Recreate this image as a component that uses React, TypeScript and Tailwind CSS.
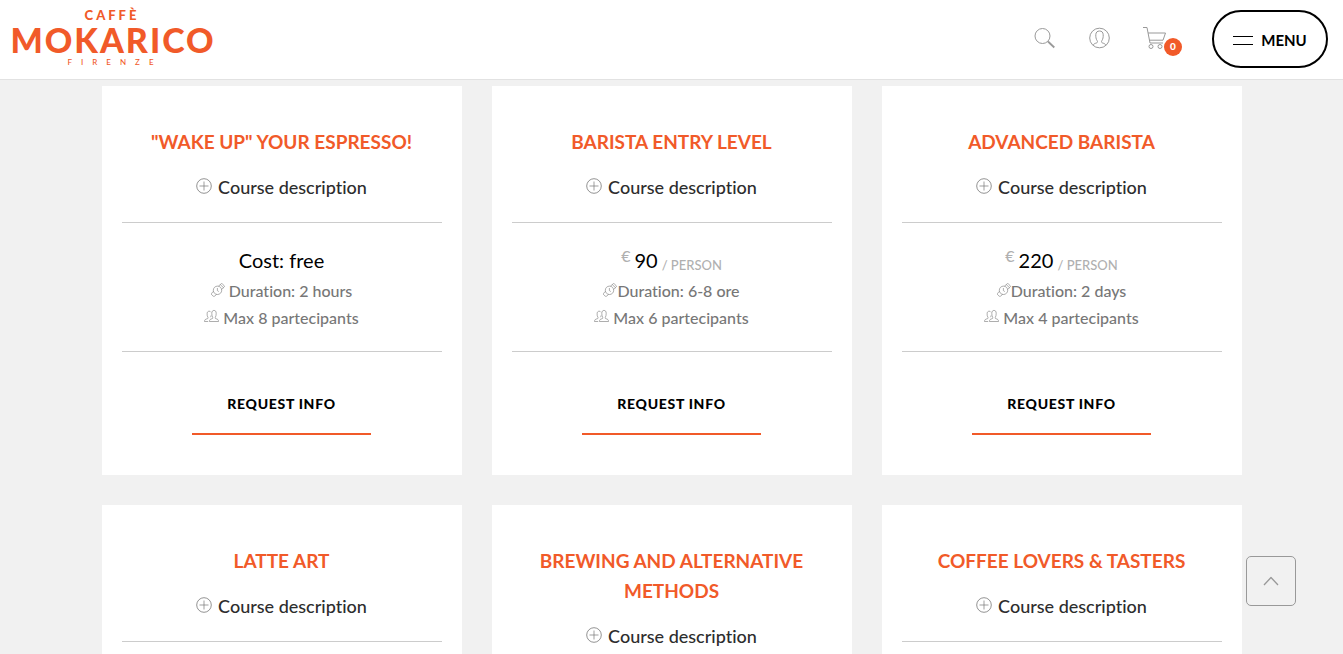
import type { ReactNode } from 'react'

type Course = {
  title: string
  price?: string
  duration: string
  // the free course has a space between icon and duration
  spaced?: boolean
  people: number
}

const courses: Course[] = [
  { title: '"WAKE UP" YOUR ESPRESSO!',         duration: '2 hours', people: 8, spaced: true },
  { title: 'BARISTA ENTRY LEVEL',              duration: '6-8 ore', people: 6, price: '90' },
  { title: 'ADVANCED BARISTA',                 duration: '2 days',  people: 4, price: '220' },
  { title: 'LATTE ART',                        duration: '2 days',  people: 4, price: '220' },
  { title: 'BREWING AND ALTERNATIVE METHODS',  duration: '2 days',  people: 4, price: '220' },
  { title: 'COFFEE LOVERS & TASTERS',          duration: '2 hours', people: 8, price: '90' },
]

function Icon({ className, box = 22, children }: { className: string; box?: number; children: ReactNode }) {
  return (
    <svg
      className={className}
      viewBox={`0 0 ${box} ${box}`}
      fill="none"
      stroke="currentColor"
      strokeLinejoin="round"
      aria-hidden="true"
    >
      {children}
    </svg>
  )
}

function Logo() {
  return (
    <a href="#" aria-label="Caffè Mokarico Firenze" className="block w-[204px] shrink-0 text-[#f15a29]">
      <svg viewBox="0 0 204 78" className="block w-full" fill="currentColor" fontFamily="Lato, sans-serif" textAnchor="middle">
        <text x="102" y="19" fontSize="13" fontWeight="900" letterSpacing="3">CAFFÈ</text>
        <text x="103" y="52" fontSize="34" fontWeight="900" letterSpacing="2">MOKARICO</text>
        <text x="105" y="64" fontSize="8" fontWeight="500" letterSpacing="9">FIRENZE</text>
      </svg>
    </a>
  )
}

function Header() {
  return (
    <header className="flex h-20 shrink-0 items-center justify-between border-b border-[#e2e2e2] bg-white pl-2.5 pr-[15px]">
      <Logo />
      <div className="flex items-center">
        <button aria-label="Search" className="mb-1 text-[#999]">
          <Icon className="size-[22px]">
            <circle cx="8.500" cy="9" r="7.500" />
            <path d="M14 14.500l6.300 6" strokeWidth="1.800" />
          </Icon>
        </button>
        <button aria-label="Account" className="mb-1 ml-[33px] text-[#999]">
          <Icon className="size-[22px]">
            <circle cx="10.500" cy="11" r="9.800" />
            <path d="M4.200 18.300c.4-1.500 1.600-1.800 3.200-2.300 1.200-.4 1.400-1.300.7-2.400C7 12 6.700 10 6.800 7.700 6.900 5.200 8.300 4 10.500 4s3.600 1.200 3.700 3.700c.1 2.300-.2 4.300-1.300 5.900-.7 1.100-.5 2 .7 2.400 1.600.5 2.800.8 3.200 2.300" />
          </Icon>
        </button>
        <button aria-label="Cart" className="relative mb-1 ml-8 text-[#999]">
          <Icon className="size-6" box={24}>
            <path d="M0 1.500h4l3 15.500h13M5 7h17.500L20 14.200H6.400" />
            <circle cx="8" cy="20.500" r="2" />
            <circle cx="17" cy="20.500" r="2" />
          </Icon>
          <span className="absolute -bottom-1.5 -right-[15px] flex size-[18px] items-center justify-center rounded-full bg-[#f15a29] text-[10px] font-black text-white">
            0
          </span>
        </button>
        <button className="mb-0.5 ml-[45px] flex h-[58px] w-[116px] items-center justify-center gap-2 rounded-full border-2 border-black text-[15px] font-bold text-black">
          <span className="mt-1 h-[9px] w-5 border-y border-black" />
          <span className="pt-1">MENU</span>
        </button>
      </div>
    </header>
  )
}

function CourseCard({ course }: { course: Course }) {
  return (
    <article className="bg-white px-5 pb-10 pt-[41px] text-center">
      <h3 className="text-[19px] font-bold leading-[30px] text-[#f15a29]">{course.title}</h3>

      <button className="mx-auto mt-[15px] flex items-center justify-center gap-1.5 text-lg font-medium leading-[30px] text-[#2d2d2d]">
        <Icon className="mb-0.5 size-4 text-[#777]" box={16}>
          <circle cx="8" cy="8" r="7.300" strokeWidth="0.8" />
          <path d="M8 3.500v9M3.500 8h9" strokeWidth="0.7" />
        </Icon>
        Course description
      </button>

      <div className="mt-5 border-y border-[#ccc] pb-5 pt-[22px] text-base font-medium leading-[27px] text-[#777]">
        <p className="mb-0.5 flex h-[30px] items-center justify-center text-xl font-normal text-black">
          {course.price ? (
            <>
              <span className="mb-2 mr-1 text-base text-[#b0b0b0]">€</span>
              {course.price}
              <span className="ml-1 mt-2.5 text-[13px] font-medium text-[#b0b0b0]">/ PERSON</span>
            </>
          ) : (
            'Cost: free'
          )}
        </p>
        <p className="flex items-center justify-center">
          <Icon className={course.spaced ? 'mb-0.5 mr-1 size-3.5' : 'mb-0.5 size-3.5'} box={14}>
            <g strokeWidth="0.6">
              <circle cx="6.500" cy="7.300" r="4.200" />
              <path d="M6.400 5v2.600l1.400 1M7.600 3.200l2.200-2.300c.5-.5 1-.5 1.500 0l1.800 1.700c.5.500.5 1 0 1.500l-2.400 2.300M9.200 1.500l3.400 3.300M2.400 8.300L.9 10c-.6.700-.6 1.400 0 2l1 .9c.6.600 1.300.6 2 0l1.700-1.500" />
            </g>
          </Icon>
          Duration: {course.duration}
        </p>
        <p className="flex items-center justify-center">
          <Icon className="mb-0.5 mr-1 size-[15px]" box={15}>
            <g strokeWidth="0.6">
              <path d="M5.500 12.500h9c.1-1.600-.6-2.300-2.600-2.800-.8-.2-.9-.8-.5-1.500.6-1 .8-2.400.8-3.900 0-1.900-.8-2.900-2.200-2.900S7.800 2.400 7.800 4.300c0 1.500.2 2.900.8 3.900.4.700.3 1.300-.5 1.500-2 .5-2.700 1.200-2.600 2.800z" />
              <path d="M6.800 3.200c-.4-.7-.9-1-1.600-1-1.400 0-2.100 1-2.100 2.700 0 1.300.2 2.500.8 3.400.4.600.3 1.100-.5 1.400C1.400 10.200.5 10.700.5 12.500h3.700M7 6.500c-.1.700-.2 1.200-.5 1.700" />
            </g>
          </Icon>
          Max {course.people} partecipants
        </p>
      </div>

      <a
        href="#request"
        className="mx-auto mt-[37px] block w-[179px] border-b-2 border-[#f15a29] pb-[14px] text-sm font-black leading-[30px] tracking-wider text-black"
      >
        REQUEST INFO
      </a>
    </article>
  )
}

export default function App() {
  return (
    <div className="relative flex h-screen flex-col overflow-hidden bg-[#f1f1f1] font-[Lato,sans-serif] [font-variant-ligatures:none]">
      <Header />
      <main className="min-h-0 flex-1 overflow-hidden px-4 pt-1.5">
        <div className="mx-auto grid max-w-[1140px] grid-cols-3 gap-[30px]">
          {courses.map(course => (
            <CourseCard key={course.title} course={course} />
          ))}
        </div>
      </main>

      {/* Back to top, floats over the page */}
      <button
        aria-label="Back to top"
        className="absolute bottom-12 right-[47px] flex size-[50px] items-center justify-center rounded-[5px] border border-[#999] text-[#999]"
      >
        <Icon className="size-4" box={16}>
          <path d="M1 12l7-7.500 7 7.500" strokeWidth="1.300" />
        </Icon>
      </button>
    </div>
  )
}
